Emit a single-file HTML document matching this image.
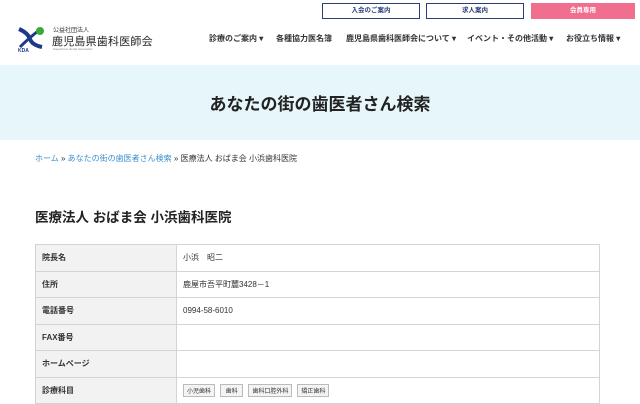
<!DOCTYPE html><html><head><meta charset="utf-8"><style>
*{margin:0;padding:0;box-sizing:border-box}
body{width:640px;height:400px;overflow:hidden;background:#fff;font-family:"Liberation Sans","Noto Sans CJK JP",sans-serif;color:#333;position:relative}
.a{position:absolute;white-space:nowrap}
.btn{position:absolute;top:3px;height:16px;font-size:6.5px;text-align:center;line-height:14px;border:1px solid #2a3d7a;color:#2a3d7a;background:#fff;font-weight:bold}
.nav{top:33px;font-size:8px;font-weight:bold;color:#333}
table{position:absolute;left:35px;top:244px;width:565px;border-collapse:collapse;font-size:8px}
td{border:1px solid #d4d4d4;height:26.5px;padding:0 6px}
td.l{background:#f2f2f2;width:141px;font-weight:bold}
.tag{display:inline-block;border:1px solid #bbb;background:#f4f4f4;font-size:6px;padding:1px 3px;margin-right:5px}
</style></head><body>
<svg class="a" style="left:16px;top:25px" width="30" height="28" viewBox="0 0 30 28"><path d="M3 4 Q12 8 14 14 Q16 20 26 22" stroke="#1d3a8a" stroke-width="4" fill="none"/><path d="M4 22 Q12 14 22 6" stroke="#1d3a8a" stroke-width="3" fill="none"/><circle cx="24" cy="6" r="4" fill="#3aaa35"/><text x="2" y="27" font-size="5" fill="#1d3a8a" font-weight="bold">KDA</text></svg>
<div class="a" style="left:53px;top:25px;font-size:6px">公益社団法人</div>
<div class="a" style="left:52px;top:33px;font-size:11px;letter-spacing:0.2px;color:#222">鹿児島県歯科医師会</div>
<div class="a" style="left:53px;top:47px;font-size:3px;color:#888">Kagoshima dental association</div>
<div class="btn" style="left:322px;width:98px">入会のご案内</div>
<div class="btn" style="left:426px;width:98px">求人案内</div>
<div class="btn" style="left:531px;width:104px;background:#f06e8e;border-color:#f06e8e;color:#fff">会員専用</div>
<div class="a nav" style="left:209px">診療のご案内 ▾</div>
<div class="a nav" style="left:276px">各種協力医名簿</div>
<div class="a nav" style="left:346px">鹿児島県歯科医師会について ▾</div>
<div class="a nav" style="left:467px">イベント・その他活動 ▾</div>
<div class="a nav" style="left:566px">お役立ち情報 ▾</div>
<div class="a" style="left:0;top:65px;width:640px;height:75px;background:#e6f6fb"></div>
<div class="a" style="left:0;top:90px;width:640px;text-align:center;font-size:17px;font-weight:bold;color:#222">あなたの街の歯医者さん検索</div>
<div class="a" style="left:35px;top:153px;font-size:8px"><span style="color:#3a8fd0">ホーム</span> » <span style="color:#3a8fd0">あなたの街の歯医者さん検索</span> » 医療法人 おばま会 小浜歯科医院</div>
<div class="a" style="left:35px;top:206px;font-size:13.5px;font-weight:bold;color:#222">医療法人 おばま会 小浜歯科医院</div>
<table>
<tr><td class="l">院長名</td><td>小浜　昭二</td></tr>
<tr><td class="l">住所</td><td>鹿屋市吾平町麓3428－1</td></tr>
<tr><td class="l">電話番号</td><td>0994-58-6010</td></tr>
<tr><td class="l">FAX番号</td><td></td></tr>
<tr><td class="l">ホームページ</td><td></td></tr>
<tr><td class="l">診療科目</td><td><span class="tag">小児歯科</span><span class="tag">&nbsp;歯科&nbsp;</span><span class="tag">歯科口腔外科</span><span class="tag">矯正歯科</span></td></tr>
</table>
</body></html>
